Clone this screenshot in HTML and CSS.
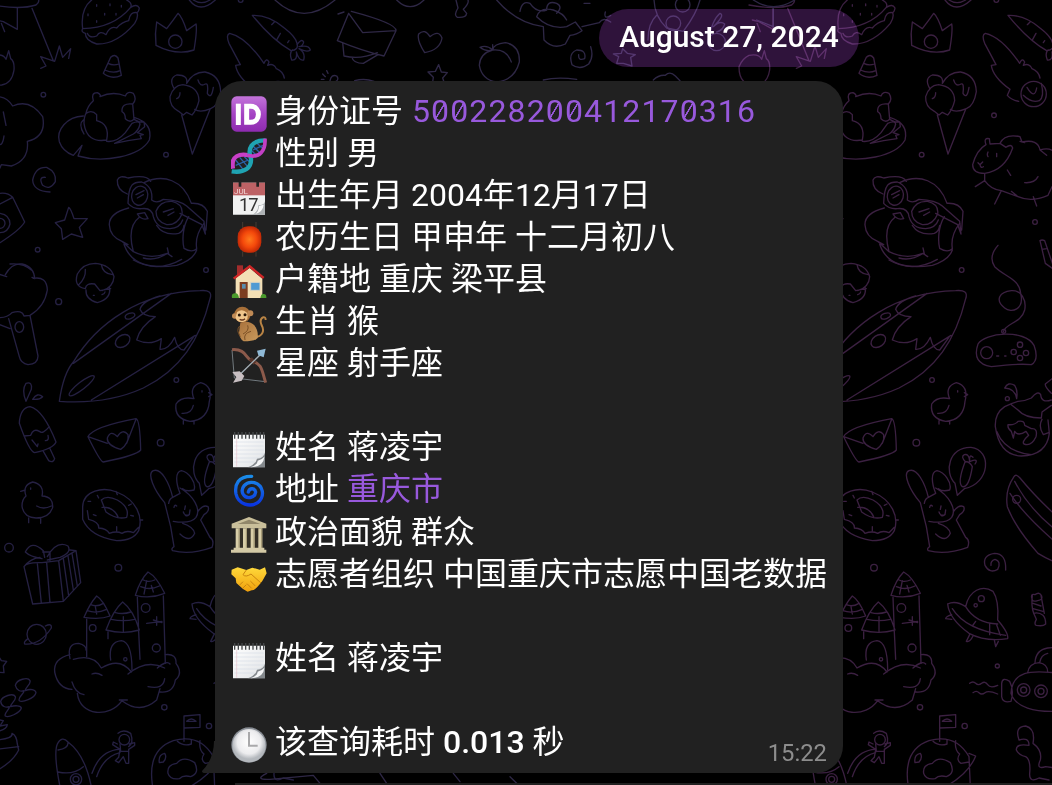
FILE: index.html
```html
<!DOCTYPE html>
<html lang="zh-CN">
<head>
<meta charset="utf-8">
<title>Chat</title>
<link rel="stylesheet" href="styles.css">
</head>
<body>
<svg class="wallpaper" viewBox="0 0 3156 2355" aria-hidden="true">
  <defs>
    <g id="tile">
      <path d="M-20 15Q60 30 108 15Q118 8 116 0M52 22V88L10 65L-10 60M4 70L14 95M96 25L160 182M122 205L138 198L122 170L164 184L178 138L188 172L212 146L206 175"/>
      <path d="M248 86C242 40 256 15 275 0M380 0Q398 10 392 22Q340 84 248 86Q242 96 256 100Q256 122 290 132Q350 134 404 70Q416 52 411 38Q390 34 386 62Q366 66 350 84Q330 76 318 104Q300 90 290 108Q270 116 262 100M392 22Q410 10 418 24Q416 36 411 38M264 42v5M290 62v5M314 40v5M348 40v5M290 14v5M330 12v5M364 16v5"/>
      <path d="M568 0Q600 42 646 0M580 0Q604 16 630 0"/>
      <path d="M470 66L500 86Q520 60 534 40Q546 50 560 92L588 72Q592 90 582 150Q530 168 468 136Q464 100 470 66"/><circle cx="526" cy="125" r="20"/>
      <path d="M-20 166Q10 160 18 178L26 152L32 176Q44 184 42 210Q36 250 5 255Q-50 260 -50 200Q-40 175 -20 166"/>
      <path d="M332 172Q344 160 354 174L364 226Q334 240 310 220ZM324 190Q340 198 356 192M314 210Q340 222 360 212"/>
      <path d="M522 265Q505 235 530 225Q565 224 560 250M560 250Q580 215 615 216Q660 225 662 275Q655 318 632 326Q600 340 584 328M548 254Q596 260 597 302Q590 330 576 345L560 337L550 345L536 334Q508 320 510 290Q520 256 548 254M545 345L577 462L630 328M594 240Q600 262 616 252Q626 248 622 280Q634 300 640 262M540 278Q540 292 530 296"/>
      <circle cx="130" cy="284" r="7"/><circle cx="498" cy="464" r="7"/>
      <path d="M280 302Q272 278 292 278Q304 284 300 290Q340 272 376 288Q382 272 400 280Q412 298 398 312L402 358M280 302Q262 318 258 340Q276 328 290 344L290 362Q330 372 320 420Q260 430 252 370Q252 350 258 340M398 312Q364 308 366 335Q376 340 376 356Q390 370 402 358L416 365M320 424Q350 428 376 398L396 370Q418 360 420 372Q416 392 400 402L344 430L384 422L424 416L420 406L430 404L412 398L434 380L432 366L418 366M250 348C200 350 168 390 178 425Q188 454 220 466L246 436L234 468C310 490 420 470 448 420Q460 370 402 352M250 360Q234 372 252 402"/>
      <path d="M-10 290Q20 290 38 318Q90 295 128 350Q140 410 82 424Q88 480 34 498L4 494L-8 520M10 336L18 376M12 408Q8 440 -5 432"/>
      <path d="M150 576Q100 574 98 540Q106 500 140 502Q170 516 166 545Q150 572 128 556Q114 530 136 532"/>
      <path d="M-10 582Q20 574 38 592L74 666Q60 690 0 728M0 612L38 592M0 640Q30 645 30 672Q24 698 0 698"/><circle cx="0" cy="670" r="15"/>
      <path d="M206 622Q212 624 222 656L262 656L238 682L248 712L214 702L188 718L184 686L166 668L194 660Z"/><circle cx="113" cy="749" r="7"/>
      <path d="M382 582Q350 570 352 540Q358 524 384 534Q440 522 452 544M432 548C490 520 550 540 574 610M384 610C386 550 400 546 425 546Q460 560 455 600Q470 612 490 598Q540 600 560 618L612 664L616 702L606 674L540 640M574 610Q610 608 622 634L618 690M384 610Q400 628 425 626Q456 622 460 650Q470 686 510 686Q540 684 548 660"/><ellipse cx="419" cy="587" rx="24" ry="29" transform="rotate(15 419 587)"/><path d="M468 634Q480 602 516 604Q550 612 546 642Q532 676 500 674Q468 666 468 634M408 584L432 572M412 594L430 584M490 636L520 626M504 646L522 636M412 642L434 638L444 656Q424 662 412 642M470 676Q490 708 536 700Q550 694 552 676M386 624Q326 640 328 675Q330 710 366 724L400 755Q380 680 418 652M366 724L384 734M400 755Q450 780 502 760L516 770M502 744L506 762M502 760Q466 784 430 774M370 726C390 800 460 806 530 796Q580 780 590 750M566 650C548 680 546 720 552 745Q576 760 590 746Q584 706 612 670"/>
      <path d="M30 792Q70 788 94 810M400 780Q470 820 545 778"/>
      <g transform="translate(0 780)">
        <path d="M-10 40L20 50M16 44Q36 8 66 12Q102 20 104 56L96 52M100 55Q140 48 142 90Q134 140 90 166M-10 172Q20 176 36 158Q66 148 72 168L90 166L114 288Q114 312 84 314Q62 310 58 290L26 176M-10 190L30 206"/><ellipse cx="58" cy="201" rx="13" ry="16"/><circle cx="176" cy="125" r="9"/><circle cx="618" cy="30" r="7"/><circle cx="529" cy="360" r="7"/><circle cx="482" cy="548" r="10"/>
        <path d="M256 86Q220 80 232 42Q250 10 286 10Q332 14 342 50Q340 82 306 92M256 86Q258 68 284 72L300 92L332 86M258 90Q256 118 292 128Q336 116 328 80M236 74Q258 54 256 28M304 14Q308 42 338 44M280 106h3M306 104q8-2 9-8"/>
        <path d="M178 424Q190 340 220 306C290 190 420 96 600 92Q640 88 630 116C600 240 540 330 430 384Q320 434 178 424ZM220 310L514 100M274 420L586 226M420 148Q428 122 480 108M420 148Q428 170 466 170Q420 200 410 240Q450 258 484 236L480 268Q506 270 524 232Q532 270 552 270L580 232"/><ellipse cx="390" cy="168" rx="15" ry="8" transform="rotate(-20 390 168)"/><ellipse cx="368" cy="243" rx="24" ry="17" transform="rotate(-35 368 243)"/><ellipse cx="245" cy="377" rx="47" ry="11" transform="rotate(-38 245 377)"/>
        <path d="M78 424Q64 390 78 370Q98 364 94 388ZM98 418Q112 396 128 410Q118 420 98 418M58 490Q60 444 90 440Q130 450 168 546Q160 566 104 578Q88 576 58 490M72 528L92 526Q100 504 118 514Q128 524 148 500M96 540L112 560L114 552M130 574L146 602Q160 610 164 596L150 566M136 542q12 0 8-16"/>
        <path d="M582 416Q566 380 602 368Q640 378 628 424Q624 480 570 484Q522 476 528 432Q544 408 582 416M626 398L636 404L626 410M546 460Q574 462 580 436M550 482v10M582 484v8M606 392v4"/>
        <path d="M264 530Q280 500 408 476Q420 480 422 570Q410 586 310 606Q300 604 264 530L322 550M408 478L380 550M362 568Q320 556 322 534Q332 508 352 530Q368 504 384 524Q388 550 362 568"/>
        <path d="M78 708Q66 676 98 666Q134 674 126 708Q160 710 158 742Q148 774 108 774Q70 772 66 738Q66 718 78 708M76 690L62 694M110 738Q130 750 154 738M86 774V788M122 774V790M92 684v4"/>
        <path d="M248 740C250 690 310 680 350 696C410 720 430 770 416 812Q400 842 350 842Q270 830 248 778ZM304 720Q320 704 352 720Q390 742 380 772Q350 780 318 756ZM306 742Q340 740 354 770M262 752L266 778Q298 786 296 804Q320 806 328 820Q350 812 366 820Q380 810 400 818L416 802M292 706l4 8M348 694l4 10M386 736l8-4M392 766l8 2M280 764l8 3M264 724h8M350 800v12M420 780h8"/>
        <path d="M494 728C462 690 440 640 460 632C484 622 508 670 518 712L540 700C528 670 524 636 544 632C566 636 590 668 582 690Q560 696 548 686M518 712Q508 716 506 730M540 684C580 706 604 748 588 772C574 790 544 788 520 784M494 728L512 800L522 860Q512 866 518 872Q570 886 636 862Q644 840 630 832L602 780L612 764Q630 752 624 740Q610 732 594 754M548 790Q580 800 584 820Q570 850 540 822M556 738l-2 10M570 750l-2 14M550 756q4 14 18 8M530 738q-6-6-8 4M556 766q8 4 12-4"/>
        <path d="M605 706L598 670C564 636 580 560 646 562C710 570 704 670 626 686ZM628 606Q604 670 620 680Q640 684 650 620Q640 602 628 606M630 606Q614 590 626 584Q640 580 642 604M642 604Q640 580 652 592M644 604Q670 594 658 612"/>
      </g>
      <g transform="translate(0 1560)">
        <circle cx="27" cy="83" r="13"/><circle cx="355" cy="143" r="10"/><circle cx="493" cy="562" r="8"/><circle cx="627" cy="618" r="8"/>
        <path d="M72 140Q80 126 126 128L176 122L228 92L242 188L190 244L98 252ZM112 130L124 250M140 128L150 248M176 122L190 244M190 116L206 228M204 108L220 210M216 100L232 198M126 116Q90 110 76 96Q94 58 130 92L134 112M142 110Q170 60 204 78Q216 98 180 112L142 120M128 96H150V122M72 140Q90 116 120 112M210 90L228 92"/>
        <ellipse cx="110" cy="343" rx="29" ry="30"/><path d="M84 356Q70 366 74 372Q120 376 154 324Q156 308 136 318"/>
        <path d="M46 496C50 478 84 470 90 482C94 492 74 504 76 512C90 506 106 508 108 518C104 536 66 548 58 542C52 532 74 520 72 512C62 516 50 512 46 496ZM2 544C6 528 40 518 46 530C50 540 30 552 32 560C44 556 62 556 64 564C60 580 24 594 16 588C10 580 30 568 28 560C18 564 4 560 2 544ZM-10 598L10 602L0 618L22 614Q20 630-10 634M-10 400L4 422L20 424L10 438L12 458L-10 456M-10 660Q40 656 36 640Q50 646 52 672L56 690Q40 724-10 752M-10 688L56 680"/>
        <path d="M260 410V296M252 292Q270 250 290 228Q310 240 330 288Q300 300 252 292M262 272Q290 282 320 268M272 254Q290 262 310 250M286 260l4 22M318 330Q340 270 368 246Q400 270 418 330Q370 344 318 330M334 298Q370 306 404 298M346 278Q370 284 392 276M370 290v44M324 356V336M416 336L420 418M406 226Q420 180 444 156Q470 170 494 220Q450 238 406 226M422 200Q450 212 478 198M430 180Q446 188 464 180M440 182l-8 40M454 196l6 20M412 232L416 336M490 228L496 430M332 420Q324 366 364 362Q396 366 396 450M460 300L486 308M440 310L486 304M470 290v26"/><circle cx="278" cy="324" r="10"/><circle cx="437" cy="264" r="13"/><circle cx="469" cy="384" r="12"/><circle cx="376" cy="418" r="5"/>
        <path d="M210 416Q200 370 236 370Q260 376 258 390M220 418Q280 400 304 444M304 444Q360 410 394 456M276 462Q290 456 306 466M384 462Q440 416 494 444M472 444Q500 420 510 432M496 404Q530 400 528 430Q550 460 526 480Q520 520 480 516M210 404Q160 416 164 456Q174 506 216 508M216 486Q226 520 252 524M232 520C240 590 330 594 366 542Q420 584 470 540L480 506M358 540h24M444 500Q490 510 494 476"/>
        <path d="M552 664V588L600 584V622L552 624M560 604Q574 590 588 604ZM532 664Q550 680 574 672V660M458 800Q440 690 520 662Q600 640 640 710L644 800M478 728Q474 704 494 700Q502 712 490 726ZM504 760Q500 734 530 730Q550 706 584 728Q600 760 572 770Q550 764 538 776Q510 780 504 760M600 662Q596 690 612 702Q600 720 616 730L640 726M570 800Q640 760 660 708L640 700"/>
        <path d="M180 800Q160 700 172 672Q186 646 204 666C250 700 266 760 274 800M174 690Q206 686 204 666M174 756Q220 766 250 740M276 760Q300 690 360 688M290 770Q310 710 360 698"/><circle cx="228" cy="778" r="17"/><circle cx="228" cy="778" r="9"/><circle cx="373" cy="659" r="16"/><path d="M354 640Q370 626 392 640Q402 670 386 680M352 672L340 666L338 674L360 688L356 712L346 722L356 728L370 710L378 730L386 730V688L404 676V668L388 672M360 672L362 694H384"/>
        <path d="M576 252Q600 240 630 260C640 210 680 194 712 214Q730 240 726 300Q760 340 756 356Q690 366 640 340Q580 296 576 252M630 260Q660 310 726 312M590 266Q630 330 750 346M650 318l10-14M702 344V312M734 346L722 312M588 284q-18 6-18 12l18 2M642 344l-10 20q10 4 20-16M716 360l4 20 8-16"/><circle cx="677" cy="236" r="9"/><circle cx="660" cy="256" r="5"/>
        <path d="M750 150Q752 100 716 100Q680 106 688 136Q702 162 726 148Q738 124 718 118Q704 122 706 136"/><circle cx="725" cy="438" r="6"/>
        <path d="M830 226Q826 258 834 280M856 226L866 280M830 240Q822 220 838 224Q852 214 858 228Q862 240 846 242Q832 246 830 240M834 280L842 298Q834 314 842 316Q862 320 870 312Q870 294 862 286Q850 276 834 280M832 250l24 8M832 266l30 8"/>
        <path d="M642 490q10-8 18 0t18 0t18 4t30 2M652 518q10-8 18 0t18 0t38 4M762 484Q740 470 738 490V530Q740 550 766 544Q776 510 762 484M766 520C770 440 850 456 900 458M766 520C780 564 840 576 900 574M816 458Q820 430 850 428Q876 432 876 456M838 428Q840 390 876 384L900 382M852 428Q856 404 876 400"/><circle cx="804" cy="510" r="19"/><circle cx="804" cy="510" r="9"/><circle cx="856" cy="514" r="19"/><circle cx="856" cy="514" r="9"/>
        <path d="M790 660Q776 620 810 618Q840 626 832 670Q860 690 854 720Q840 750 870 740L900 744M790 660Q820 650 820 676Q780 670 782 690Q790 706 810 710Q826 720 822 760Q820 790 850 774L880 780"/>
      </g>
      <g transform="translate(247 0)">
        <path d="M510 46Q560 44 606 84Q640 110 644 130Q650 150 626 152Q570 120 510 46M584 118l10-18M568 74l8-8M616 128l4-6M644 134q14-20 20-8q-2 12-14 14q30-6 34 10q-10 8-34-4q20 12 14 34q-14 4-22-24q4 26-14 24q-8-20 2-30"/>
        <path d="M545 190Q490 110 442 100Q430 104 440 130L474 194L460 196Q464 230 516 268L508 286Q520 300 542 304M545 190Q552 172 560 186L556 196Q574 188 582 206Q602 214 606 234"/><circle cx="587" cy="282" r="38"/><path d="M567 262Q590 300 596 264M610 250Q620 290 604 302Q580 310 556 286"/>
        <circle cx="468" cy="346" r="7"/><circle cx="591" cy="666" r="7"/><circle cx="475" cy="0" r="7"/>
        <path d="M444 434Q436 412 454 416L456 432L486 430L504 442Q520 430 524 444Q500 512 440 520Q404 520 404 494Q416 450 444 434M486 430Q500 400 546 410L552 426Q600 416 606 450Q650 436 660 480M546 424L560 428M606 450L626 466M440 520L440 542L412 560M440 542Q460 570 490 572L470 612M490 572L540 590Q580 608 630 586L642 560M586 590L596 618M450 456q-4 8 0 14M476 460v10M420 488l6 6l8-8M426 494q2 12 10 6M508 510l10 16M560 548Q590 550 600 530M520 574l20 16"/>
        <path d="M480 736Q450 770 470 800C500 830 544 836 548 880C560 930 520 940 500 924C470 900 484 876 520 872C550 870 566 900 560 930C550 970 500 970 496 996M606 722L622 790L650 810L620 722Q612 718 606 722M612 748l14-2"/>
        <g transform="translate(0 780)"><path d="M420 252C440 218 560 206 588 256Q604 300 580 314Q540 310 460 320Q400 310 420 252M476 288h6M500 288h4"/><circle cx="497" cy="214" r="6"/><circle cx="446" cy="278" r="18"/><circle cx="546" cy="254" r="8"/><circle cx="527" cy="276" r="8"/><circle cx="564" cy="279" r="8"/><circle cx="546" cy="294" r="8"/>
        <path d="M500 384Q510 364 530 376Q540 390 536 416Q532 386 500 384M500 440Q470 460 472 500Q484 586 550 588Q626 586 634 520L630 480M500 440Q520 430 540 424Q560 424 580 414Q600 390 608 404Q610 430 640 420M520 434L540 450Q560 474 610 474L612 456L640 436M612 478Q600 500 616 524L632 518M476 514Q500 576 580 584M510 494Q530 496 540 484Q560 480 560 496L580 506Q600 504 594 530Q580 560 558 552Q550 546 572 526L564 514Q540 530 530 514L526 534L520 514Q508 506 510 494"/><circle cx="508" cy="416" r="6"/>
        <path d="M528 650Q534 640 546 654Q600 720 680 790M528 650Q500 690 508 740Q530 800 600 880Q650 910 690 920M530 664Q580 760 680 830M516 700Q560 770 680 870M640 400Q620 380 622 372L650 350"/><circle cx="536" cy="718" r="12"/></g>
      </g>
    </g>
  </defs>
  <use href="#tile" class="ink-left"/>
  <use href="#tile" class="ink-right" x="2267"/>
  <g class="ink-mid" transform="translate(660 0)">
    <path d="M165 0Q250 80 345 0M354 42l18-6M386 40L428 98L528 92M386 40L352 122Q430 154 492 168L528 92Q530 70 394 34M368 128L372 168Q420 180 472 158M396 172Q400 190 430 190L474 164M530 0Q570 40 612 0"/>
    <path d="M614 158Q590 120 596 102Q614 84 630 110Q656 88 666 114Q660 150 614 158M656 194L664 216L682 218L668 234L672 246M656 194L646 214L624 216L640 232L638 246M708 0L714 24Q700 46 712 52Q738 54 740 40L730 28Q748 10 744 0M308 222l8 8M320 212l4 8M304 238h8M330 242q4-20 20-14q8 10-2 16M404 242q30-8 58 2"/>
    <path d="M818 150Q780 160 778 196Q786 240 830 246Q884 240 898 186Q900 136 856 128Q820 132 818 150Q860 146 874 186M780 142Q800 134 818 150Q796 156 780 142M818 134v14M1112 140Q1122 170 1106 192Q1080 212 1056 194Q1044 160 1070 150Q1100 150 1094 176Q1074 184 1076 164M970 240Q1010 230 1070 238"/>
    <path d="M830 0Q890 70 970 80L972 120Q1000 150 1036 132L1050 106Q1070 104 1086 92L1066 66L1040 80Q990 90 950 50Q960 20 1000 30Q1030 40 1040 60M900 34Q906 0 930 10Q950 40 980 30Q980 0 1010 10Q1030 20 1010 40M1086 80L1138 68Q1150 50 1172 66M1156 36Q1150 60 1172 46M1092 10h18"/>
    <path d="M1302 0Q1304 50 1340 84L1390 94Q1430 40 1440 0M1284 120Q1284 70 1310 46M1190 190L1196 170L1180 162L1204 160L1208 146L1222 160L1246 164L1232 172L1236 198L1210 190ZM1466 120Q1476 60 1500 40Q1516 46 1480 80Q1500 60 1514 72Q1510 90 1490 96M1600 0Q1660 40 1724 0M1660 20V80L1610 60"/><circle cx="1388" cy="14" r="22"/><circle cx="1360" cy="70" r="22"/><circle cx="1490" cy="126" r="26"/>
    <path d="M1300 240Q1316 224 1336 226Q1350 212 1366 228L1380 242M140 2320Q100 2340 150 2338L280 2326L300 2350M480 2320L500 2350M700 2320L720 2345M870 2330L890 2350"/>
  </g>
</svg>

<svg class="sprites" aria-hidden="true">
  <defs>
    <linearGradient id="gPurple" x2="0" y2="1"><stop stop-color="#c374da"/><stop offset=".5" stop-color="#a544c4"/><stop offset="1" stop-color="#8e2bb0"/></linearGradient>
    <radialGradient id="gLantern"><stop stop-color="#ff7a1c"/><stop offset=".6" stop-color="#f4480b"/><stop offset="1" stop-color="#c42a06"/></radialGradient>
    <linearGradient id="gPage" x2="1" y2="1"><stop stop-color="#fff"/><stop offset=".75" stop-color="#e8eaec"/><stop offset="1" stop-color="#9a9fa4"/></linearGradient>
    <linearGradient id="gFur" x2="1" y2="1"><stop stop-color="#a8713c"/><stop offset="1" stop-color="#c99a5c"/></linearGradient>
    <linearGradient id="gSwirl" x2="0" y2="1"><stop stop-color="#1a8ce8"/><stop offset="1" stop-color="#0a35e0"/></linearGradient>
    <linearGradient id="gHand" x2="0" y2="1"><stop stop-color="#ffd93b"/><stop offset="1" stop-color="#f0a00c"/></linearGradient>
    <radialGradient id="gClock" cy=".4"><stop stop-color="#fff"/><stop offset=".7" stop-color="#ececee"/><stop offset="1" stop-color="#b4b8bd"/></radialGradient>
    <symbol id="id" viewBox="0 0 108 108"><rect x="1" y="1" width="106" height="106" rx="16" fill="url(#gPurple)"/><path d="M22 23V87" stroke="#fff" stroke-width="15"/><path d="M47 31H59C90 31 90 79 59 79H47Z" fill="none" stroke="#fff" stroke-width="15"/></symbol>
    <symbol id="dna" viewBox="0 0 108 108" fill="none"><path d="M66 24L88 46M78 16L96 32M60 36L76 52M14 66L36 94M26 58L50 86M40 56L58 74M66 36L96 22M14 82L52 66" stroke="#2a62a8" stroke-width="4"/><path d="M6 92C-2 52 28 46 54 52" stroke="#c93fc8" stroke-width="13"/><path d="M2 100C42 106 62 88 60 62C48 32 62 6 104 7" stroke="#1fa3b2" stroke-width="13"/><path d="M50 52C88 62 104 36 102 2" stroke="#c23fc4" stroke-width="11"/></symbol>
    <symbol id="calendar" viewBox="0 0 108 108"><path d="M6 8H102V104H6Z" fill="#f1f2f2"/><path d="M6 8H102V46H6Z" fill="#bd6265"/><path d="M27 2V20M80 2V20" stroke="#222" stroke-width="8"/><path d="M102 64Q100 76 82 76Q82 96 64 104H102Z" fill="#aeb2b5"/><path d="M98 74Q84 78 84 78Q84 94 72 102Q96 96 98 74" fill="#f9f9f9"/><text x="9" y="42" font-size="24" fill="#f3d8d8">JUL</text><text x="24" y="93" font-size="55" letter-spacing="-3" fill="#333">17</text></symbol>
    <symbol id="lantern" viewBox="0 0 108 108"><path d="M34 4H76V24H34ZM34 84H76V102H34Z" fill="#25201d"/><path d="M35 0V20M75 0V20M35 88V104M75 88V104" stroke="#57493d" stroke-width="2"/><rect x="20" y="13" width="71" height="79" rx="31" fill="url(#gLantern)"/></symbol>
    <symbol id="house" viewBox="0 0 108 108"><path d="M18 4H36V34H18Z" fill="#a32c2c"/><path d="M14 42L56 12L94 44V102H14Z" fill="#f3dfb5"/><path d="M8 44L56 7L98 42" fill="none" stroke="#cf2626" stroke-width="7"/><path d="M26 54H50V102H26Z" fill="#7c3d1f"/><path d="M33 60H44V74H33Z" fill="#5a8dab"/><path d="M59 55H87V79H59Z" fill="#4f9ad3" stroke="#d8d4c4" stroke-width="3"/><path d="M3 102Q0 88 12 88Q22 86 24 102M88 102Q90 88 98 90Q107 90 106 102" fill="#4a9a2c"/></symbol>
    <symbol id="monkey" viewBox="0 0 108 108"><path d="M68 94C98 92 100 72 92 58Q84 40 96 34Q104 32 104 42" fill="none" stroke="#b98445" stroke-width="6"/><path d="M28 50C64 38 84 66 80 96Q70 106 38 106Q26 98 24 80Z" fill="url(#gFur)"/><path d="M26 60Q14 72 28 92M50 58Q56 74 36 84M42 102Q36 82 60 76" fill="none" stroke="#7b5026" stroke-width="3"/><circle cx="34" cy="26" r="24" fill="#a87039"/><circle cx="58" cy="22" r="9" fill="#c08a55"/><circle cx="11" cy="30" r="8" fill="#c08a55"/><path d="M18 18Q34 6 48 20Q56 42 36 48Q16 50 14 34Z" fill="#f0c68c"/><circle cx="25" cy="27" r="4.5" fill="#2a1608"/><circle cx="42" cy="26" r="4.5" fill="#2a1608"/><path d="M26 40Q34 45 42 38" fill="none" stroke="#5e2e16" stroke-width="4"/></symbol>
    <symbol id="bow" viewBox="0 0 108 108" fill="none"><path d="M3 6L10 90L103 101" stroke="#9aa6ad" stroke-width="2"/><path d="M3 5C46 2 42 30 62 38C94 48 92 66 104 104" stroke="#8c5a4b" stroke-width="9"/><path d="M58 32L72 46" stroke="#553329" stroke-width="12"/><path d="M22 84L90 18" stroke="#a5b0b8" stroke-width="4"/><path d="M104 2L78 8L82 22L98 28Z" fill="#8fb9d6"/><path d="M4 72L26 70L40 84L32 98L6 104L16 88Z" fill="#c8bfc2"/></symbol>
    <symbol id="notepad" viewBox="0 0 108 108"><path d="M6 8H102V106H6Z" fill="url(#gPage)"/><path d="M10 30H98M10 42H98M10 54H98M10 66H98M10 78H88M10 90H70" stroke="#cdd6e2" stroke-width="1.5"/><path d="M17 20V104" stroke="#e9b7c0" stroke-width="1.5"/><path d="M102 62Q98 78 78 80Q74 98 50 106H102Z" fill="#84898d"/><path d="M100 74Q92 84 80 86Q80 98 58 106Q98 104 100 74" fill="#f4f5f6"/><path d="M11 0V20M22 0V20M33 0V20M44 0V20M55 0V20M66 0V20M77 0V20M88 0V20M98 0V20" stroke="#45484a" stroke-width="4"/></symbol>
    <symbol id="cyclone" viewBox="0 0 108 108"><path d="M62 7C22 6 10 32 15 60C22 92 58 100 80 86C104 66 96 34 70 26C42 20 28 44 36 60C46 78 72 72 74 54C72 42 56 40 52 54" fill="none" stroke="url(#gSwirl)" stroke-width="10" stroke-linecap="round"/></symbol>
    <symbol id="temple" viewBox="0 0 108 108"><path d="M16 36H92V92H16Z" fill="#332e25"/><path d="M20 34V94M42 34V94M65 34V94M88 34V94" stroke="#d8cea8" stroke-width="12"/><path d="M24 34V94M46 34V94M69 34V94M92 34V94" stroke="#9f9470" stroke-width="3"/><path d="M2 20L54 0L106 20V34H2Z" fill="#c9bf9a"/><path d="M20 21L54 8L88 21Z" fill="#91876a"/><path d="M8 92H100V98H106V107H0V98H8Z" fill="#d3c9a5"/></symbol>
    <symbol id="shake" viewBox="0 0 108 108"><path d="M2 32L20 25L46 33L64 26L86 32L102 25L107 43L94 66Q72 95 62 94L50 98L36 90L16 72L14 58L1 46Z" fill="url(#gHand)"/><path d="M46 33L36 47Q44 56 60 45L90 72M72 80L58 66M62 88L48 74M26 78L36 68M36 87L46 77" fill="none" stroke="#c98410" stroke-width="3"/></symbol>
    <symbol id="clock" viewBox="0 0 108 108"><circle cx="54" cy="54" r="53" fill="#878c93"/><circle cx="54" cy="56" r="50" fill="url(#gClock)"/><path d="M54 15V56H80" fill="none" stroke="#a9a9ab" stroke-width="6"/></symbol>
  </defs>
</svg>

<main class="chat">
  <time class="date">August 27, 2024</time>
  <article class="bubble">
    <svg class="tail" viewBox="0 0 14 32"><path d="M14 0H12Q12 18 0 30Q0 32 3 32H14Z"/></svg>
    <p class="line"><svg class="emoji"><use href="#id"/></svg><span>身份证号 <span class="code">5<i>0</i><i>0</i>2282<i>0</i><i>0</i>41217<i>0</i>316</span></span></p>
    <p class="line"><svg class="emoji"><use href="#dna"/></svg><span>性别 男</span></p>
    <p class="line"><svg class="emoji"><use href="#calendar"/></svg><span>出生年月 2004年12月17日</span></p>
    <p class="line"><svg class="emoji"><use href="#lantern"/></svg><span>农历生日 甲申年 十二月初八</span></p>
    <p class="line"><svg class="emoji"><use href="#house"/></svg><span>户籍地 重庆 梁平县</span></p>
    <p class="line"><svg class="emoji"><use href="#monkey"/></svg><span>生肖 猴</span></p>
    <p class="line"><svg class="emoji"><use href="#bow"/></svg><span>星座 射手座</span></p>
    <p class="line"></p>
    <p class="line"><svg class="emoji"><use href="#notepad"/></svg><span>姓名 蒋凌宇</span></p>
    <p class="line"><svg class="emoji"><use href="#cyclone"/></svg><span>地址 <span class="link">重庆市</span></span></p>
    <p class="line"><svg class="emoji"><use href="#temple"/></svg><span>政治面貌 群众</span></p>
    <p class="line"><svg class="emoji"><use href="#shake"/></svg><span>志愿者组织 中国重庆市志愿中国老数据</span></p>
    <p class="line"></p>
    <p class="line"><svg class="emoji"><use href="#notepad"/></svg><span>姓名 蒋凌宇</span></p>
    <p class="line"></p>
    <p class="line"><svg class="emoji"><use href="#clock"/></svg><span>该查询耗时 <b>0.013</b> 秒</span><time class="sent">15:22</time></p>
  </article>
  <div class="next-bubble"></div>
</main>
</body>
</html>
```
FILE: styles.css
```css
* { box-sizing: border-box; }

body {
  margin: 0;
  height: 785px;
  overflow: hidden;
  background: #000;
  color: #fff;
  font-family: Roboto, "Noto Sans CJK SC", sans-serif;
}

.wallpaper {
  position: absolute;
  inset: 0;
  width: 1052px;
  height: 785px;
  fill: none;
  stroke-width: 4;
  stroke-linejoin: round;
  stroke-linecap: round;
}

.ink-left { stroke: #252042; }
.ink-mid { stroke: #2e2745; }
.ink-right { stroke: #3b2041; }

.sprites { position: absolute; width: 0; height: 0; }

.chat {
  position: relative;
  display: flex;
  flex-direction: column;
  height: 785px;
  padding: 9px 0 0 215px;
}

.date {
  display: flex;
  align-items: center;
  justify-content: center;
  width: 260px;
  height: 58px;
  margin-left: 384px;
  padding-bottom: 4px;
  border-radius: 29px;
  background: #2f133b;
  mix-blend-mode: screen;
  font-size: 30px;
  font-weight: 500;
}

.bubble {
  position: relative;
  width: 628px;
  height: 692px;
  margin-top: 14px;
  padding: 8.7px 16px 0;
  border-radius: 27px 27px 27px 0;
  background: #212121;
}

.tail {
  position: absolute;
  left: -13px;
  bottom: 0;
  width: 14px;
  height: 32px;
  fill: #212121;
}

.line {
  display: flex;
  align-items: center;
  height: 42.08px;
  margin: 0;
  font-size: 32px;
  line-height: 42px;
  white-space: nowrap;
}

.emoji {
  flex: none;
  width: 36px;
  height: 36px;
  margin: 6px 8px 0 0;
}

.code { color: #9859dc; letter-spacing: 1.13px; margin-left: 1px; }

/* slashed zero */
.code i {
  font-style: normal;
  background: linear-gradient(to bottom right, transparent 44%, #9859dc 46%, #9859dc 54%, transparent 56%) 4.5px 11px / 9px 15px no-repeat;
}

.link { color: #9859dc; }
b { font-weight: 500; }

.sent {
  margin: 22px 0 0 auto;
  color: #8d8d8d;
  font-size: 23.8px;
}

.next-bubble {
  height: 2px;
  margin: 10px 0 0 20px;
  background: #212121;
}
```
